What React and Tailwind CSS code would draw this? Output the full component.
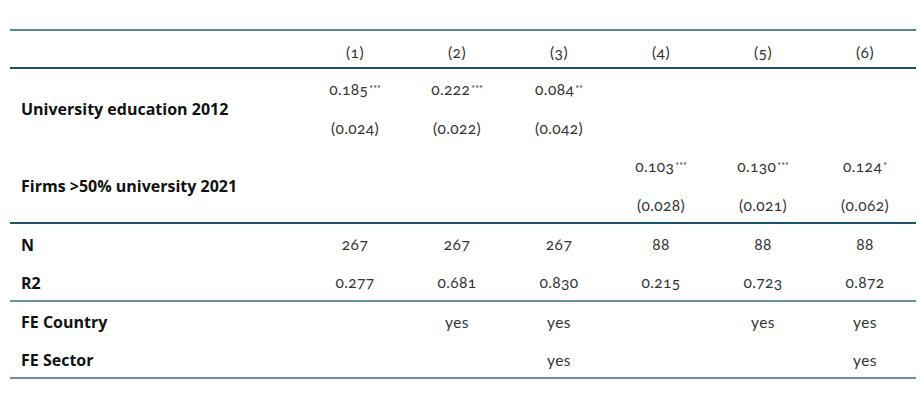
import React from "react";

const Sup = ({ s }) => <sup className="text-[9px] relative -top-[3px] ml-[1px] tracking-[0px]">{s}</sup>;

const cols = [0, 1, 2, 3, 4, 5];

function Num({ v, s }) {
  return (
    <span>
      {v}
      {s ? <Sup s={s} /> : null}
    </span>
  );
}

export default function App() {
  const td = "h-[38.75px] text-center pt-[4px] align-middle text-[15.5px] tracking-[0.4px] text-[#333]";
  const lbl = "h-[38.75px] pl-[11px] pt-[4px] align-middle text-[16px] font-bold text-[#111] whitespace-nowrap lining-nums";
  const lblFont = { fontFamily: "'Open Sans', Lato, sans-serif" };
  const r1 = [["0.185", "***"], ["0.222", "***"], ["0.084", "**"], null, null, null];
  const r1se = ["(0.024)", "(0.022)", "(0.042)", "", "", ""];
  const r2 = [null, null, null, ["0.103", "***"], ["0.130", "***"], ["0.124", "*"]];
  const r2se = ["", "", "", "(0.028)", "(0.021)", "(0.062)"];
  const N = ["267", "267", "267", "88", "88", "88"];
  const R2 = ["0.277", "0.681", "0.830", "0.215", "0.723", "0.872"];
  const FEC = ["", "yes", "yes", "", "yes", "yes"];
  const FES = ["", "", "yes", "", "", "yes"];
  return (
    <div className="w-[921px] h-[403px] bg-white pt-[29px] pl-[10px]" style={{ fontFamily: "Lato, 'Open Sans', sans-serif" }}>
      <table className="w-[906px] border-collapse table-fixed oldstyle-nums">
        <colgroup>
          <col className="w-[294px]" />
          {cols.map((i) => (
            <col key={i} className="w-[102px]" />
          ))}
        </colgroup>
        <tbody>
          <tr className="border-t-2 border-t-[#5d8197] border-b-2 border-b-[#1b4e6d]">
            <td className="h-[38px]"></td>
            {cols.map((i) => (
              <td key={i} className="h-[38px] text-center pt-[7px] text-[15.5px] tracking-[0.4px] text-[#333]">({i + 1})</td>
            ))}
          </tr>
          <tr>
            <td rowSpan={2} className={lbl} style={lblFont}>University education 2012</td>
            {r1.map((c, i) => (
              <td key={i} className={td}>{c ? <Num v={c[0]} s={c[1]} /> : null}</td>
            ))}
          </tr>
          <tr>
            {r1se.map((c, i) => (
              <td key={i} className={td}>{c}</td>
            ))}
          </tr>
          <tr>
            <td rowSpan={2} className={lbl} style={lblFont}>Firms &gt;50% university 2021</td>
            {r2.map((c, i) => (
              <td key={i} className={td}>{c ? <Num v={c[0]} s={c[1]} /> : null}</td>
            ))}
          </tr>
          <tr className="border-b-2 border-b-[#1d5473]">
            {r2se.map((c, i) => (
              <td key={i} className={td}>{c}</td>
            ))}
          </tr>
          <tr>
            <td className={lbl} style={lblFont}>N</td>
            {N.map((c, i) => (
              <td key={i} className={td}>{c}</td>
            ))}
          </tr>
          <tr className="border-b-2 border-b-[#6c8ea3]">
            <td className={lbl} style={lblFont}>R2</td>
            {R2.map((c, i) => (
              <td key={i} className={td}>{c}</td>
            ))}
          </tr>
          <tr>
            <td className={lbl} style={lblFont}>FE Country</td>
            {FEC.map((c, i) => (
              <td key={i} className={td}>{c}</td>
            ))}
          </tr>
          <tr className="border-b-2 border-b-[#6c8ea3]">
            <td className={lbl} style={lblFont}>FE Sector</td>
            {FES.map((c, i) => (
              <td key={i} className={td}>{c}</td>
            ))}
          </tr>
        </tbody>
      </table>
    </div>
  );
}
